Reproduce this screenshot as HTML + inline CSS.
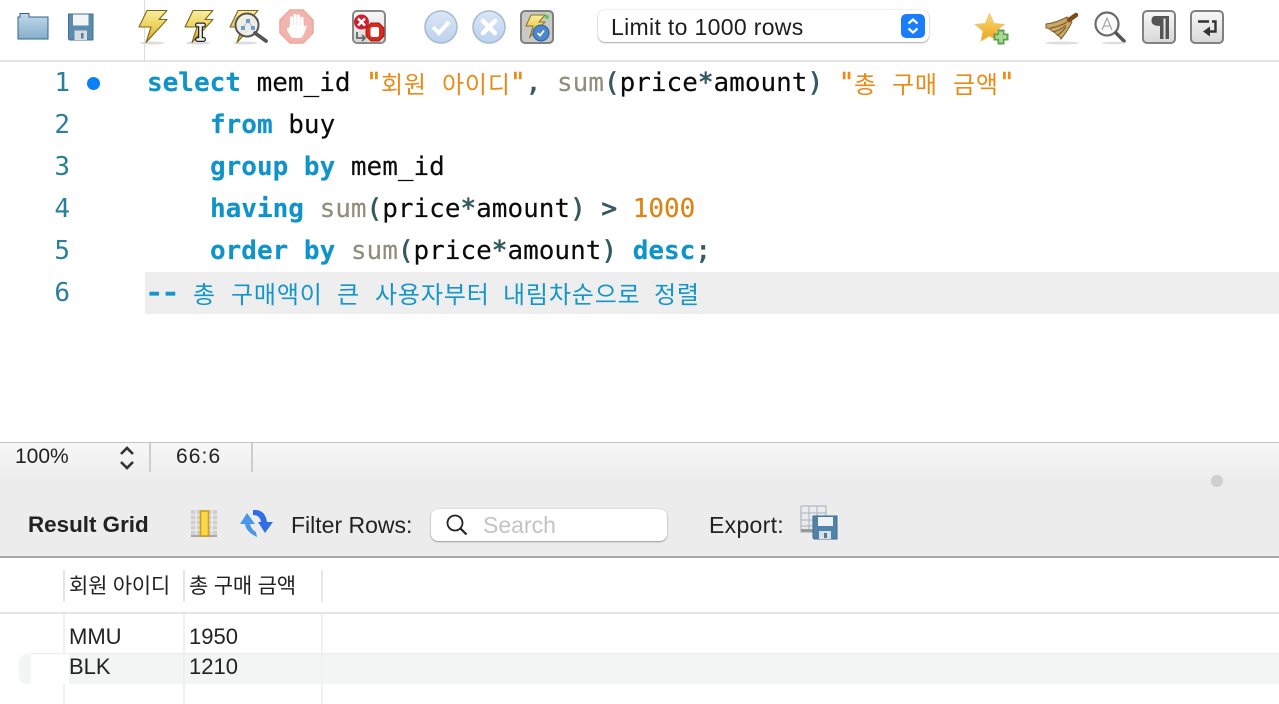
<!DOCTYPE html>
<html><head><meta charset="utf-8"><style>
html,body{margin:0;padding:0;background:#fff;width:1279px;height:704px;overflow:hidden}
.a{position:absolute;white-space:pre}
.l{position:absolute;left:147px;height:42px;line-height:42px;font:26px/42px "DejaVu Sans Mono","Noto Sans CJK KR",monospace;color:#0b0b0b;white-space:pre;-webkit-text-stroke:.15px}
.k{color:#0f93c9;font-weight:bold}.f{color:#8f8d7b}.p{color:#34595f;-webkit-text-stroke:.7px #34595f}.s{color:#ea8a17}.q{color:#ea8a17;-webkit-text-stroke:.5px #ea8a17}.n{color:#dc8311}.c{color:#1595c8}
.h{font-family:"Noto Sans CJK KR",sans-serif;font-size:24px;font-weight:400;letter-spacing:.85px;display:inline-block;line-height:30px;-webkit-text-stroke:0}
.g{position:absolute;left:0;width:70px;text-align:right;font:26px/42px "DejaVu Sans Mono",monospace;color:#2b7f99}
.u{font-family:"Liberation Sans","Noto Sans CJK KR",sans-serif;color:#222}
svg{position:absolute;overflow:visible}
</style></head><body>
<div class="a" style="left:0;top:60px;width:1279px;height:2px;background:#e4e4e4"></div>
<div class="a" style="left:144px;top:0;width:1px;height:62px;background:#dcdcdc"></div>

<!-- toolbar icons -->
<svg style="left:0;top:0" width="1279" height="60" viewBox="0 0 1279 60">
<defs>
<linearGradient id="fo" x1="0" y1="0" x2="0" y2="1"><stop offset="0" stop-color="#c3d9ea"/><stop offset="1" stop-color="#86aecd"/></linearGradient>
<linearGradient id="bo" x1="0" y1="0" x2="0" y2="1"><stop offset="0" stop-color="#f9eda0"/><stop offset=".5" stop-color="#ecd25a"/><stop offset="1" stop-color="#c9a32e"/></linearGradient>
<linearGradient id="ci" x1="0" y1="0" x2="0" y2="1"><stop offset="0" stop-color="#dbe6f6"/><stop offset="1" stop-color="#bcd2ee"/></linearGradient>
<linearGradient id="bt" x1="0" y1="0" x2="0" y2="1"><stop offset="0" stop-color="#f8f8f8"/><stop offset="1" stop-color="#d8d8d8"/></linearGradient>
<linearGradient id="st" x1="0" y1="0" x2="0" y2="1"><stop offset="0" stop-color="#f9d976"/><stop offset="1" stop-color="#eea21b"/></linearGradient>
</defs>
<!-- folder -->
<path d="M18 39V17h2v-3.500h9V17h19v22z" fill="url(#fo)" stroke="#2f6488" stroke-width="1"/>
<!-- save -->
<path d="M68.500 14h24.500v25.500q0 .5-1 .5H70q-1.500 0-1.500-2z" fill="#5b8bad" stroke="#3f7092"/>
<rect x="73" y="14.500" width="15.500" height="11" fill="#f2f4f6"/>
<rect x="74.500" y="30.500" width="12.500" height="9.500" fill="#d5dde3"/><rect x="81" y="33" width="2.500" height="5.500" fill="#5b7f99"/>
<!-- bolts -->
<ellipse cx="152" cy="43" rx="12" ry="1.500" fill="#ddd"/><path d="M147 10.500h20l-8 9h8l-21 23 5-15.500h-12z" fill="url(#bo)" stroke="#7d6517" stroke-width="1.100" stroke-linejoin="round"/>
<ellipse cx="198" cy="43" rx="12" ry="1.500" fill="#ddd"/><path d="M193 10.500h20l-8 9h8l-21 23 5-15.500h-12z" fill="url(#bo)" stroke="#7d6517" stroke-width="1.100" stroke-linejoin="round"/>
<path d="M197.500 25h6M200.500 25v14M197.500 39.500h6" stroke="#222" stroke-width="5" stroke-linecap="round" fill="none"/><path d="M197.500 25h6M200.500 25v14M197.500 39.500h6" stroke="#f2f2f2" stroke-width="2.500" stroke-linecap="round" fill="none"/>
<ellipse cx="245" cy="43" rx="12" ry="1.500" fill="#ddd"/><path d="M238 10.500h20l-8 9h8l-21 23 5-15.500h-12z" fill="url(#bo)" stroke="#7d6517" stroke-width="1.100" stroke-linejoin="round"/>
<circle cx="247" cy="25" r="11.500" fill="#eef0ea" fill-opacity=".92" stroke="#555" stroke-width="2"/><path d="M255 33l11 8" stroke="#555" stroke-width="3.800" stroke-linecap="round"/>
<path d="M248 21l-5 7M248 21l5 7" stroke="#a9c2e6" stroke-width="1"/><rect x="246" y="19" width="4" height="4" fill="#6f9ad8"/><rect x="241" y="26" width="4" height="4" fill="#6f9ad8"/><rect x="251" y="26" width="4" height="4" fill="#6f9ad8"/>
<!-- stop -->
<path d="M290 10h13l10 10v13l-10 10h-13l-10-10V20z" fill="#f2b4ad" stroke="#eaa8a0" stroke-width="1.500"/>
<path d="M291.500 27V18M295 27V15.500M298.500 27V16M302 28V18.500" stroke="#fff" stroke-width="3.200" stroke-linecap="round" fill="none"/>
<path d="M290 25h14v8q-1 5-5 5h-5q-2 0-3.500-2l-3.500-6q-.5-3 2-2z" fill="#fff"/><path d="M304 27q1-2 3-1l-3 8z" fill="#fff"/>
<!-- stop on error btn -->
<rect x="353" y="11" width="32" height="32" rx="4" fill="url(#bt)" stroke="#888" stroke-width="2"/>
<circle cx="361.500" cy="22" r="7.500" fill="#cf1f2e"/><path d="M358 18.500l7 7M365 18.500l-7 7" stroke="#fff" stroke-width="2.500"/>
<path d="M371 23h8l5 5v8l-5 5h-8l-5-5v-8z" fill="#d62a1c" stroke="#a81b10"/><rect x="370.500" y="27" width="8.500" height="10" rx="2" fill="#fff"/>
<path d="M357 32v6h7M362 35l3 3-3 3" fill="none" stroke="#666" stroke-width="1.800"/>
<!-- commit/rollback -->
<circle cx="441" cy="27" r="16" fill="url(#ci)" stroke="#a6b9d2" stroke-width="1.500"/>
<path d="M433 27l6 6 10-11" fill="none" stroke="#fff" stroke-width="4"/>
<circle cx="489" cy="27" r="16" fill="url(#ci)" stroke="#a6b9d2" stroke-width="1.500"/>
<path d="M483 21l12 12M495 21l-12 12" stroke="#fff" stroke-width="4.500" stroke-linecap="round"/>
<!-- autocommit -->
<rect x="521" y="11" width="32" height="32" rx="4" fill="#c9c9c6" stroke="#808080" stroke-width="2"/>
<path d="M531 15h14l-6 7h6l-15 15 3-11h-7z" fill="url(#bo)" stroke="#8b7320"/>
<circle cx="547" cy="17" r="2" fill="#50d050"/>
<circle cx="541" cy="33" r="8" fill="#4c86d0" stroke="#2c5f9f"/><path d="M537.500 33l2.500 2.500 4-5" fill="none" stroke="#fff" stroke-width="1.800"/>
<!-- star -->
<path d="M989.500 14l4.500 9.500 10 1-7.500 6.500 2 10-9-5-8.500 5 2-10-7.500-6.500 10-1z" fill="url(#st)" stroke="#e8c66a"/>
<path d="M1001 29.500v15M993.500 37h15" stroke="#5f9f4f" stroke-width="7"/><path d="M1001 31.500v11M995.500 37h11" stroke="#a8da96" stroke-width="3.800"/>
<!-- broom -->
<ellipse cx="1062" cy="43" rx="17" ry="1.500" fill="#ddd"/>
<path d="M1046 24q10-1 21-7l5 5q-5 10-11 17-1-3-4-4-2-3-5-4-3-3-6-3z" fill="#c9a868" stroke="#7d5f2c" stroke-width="1"/>
<path d="M1050 28q9-1 17-6M1053 32q8-2 13-7M1058 35q4-3 8-8" stroke="#7d5f2c" fill="none" stroke-width="1.200"/>
<path d="M1069 20l7-5" stroke="#7f4d1b" stroke-width="4.500" stroke-linecap="round"/>
<!-- magnify A -->
<circle cx="1107" cy="24" r="11.500" fill="#fbfbfb" stroke="#6b6b6b" stroke-width="2.200"/>
<path d="M1102 30l5-12 5 12M1104 26h6" fill="none" stroke="#999" stroke-width="1"/>
<path d="M1116 33l8 8" stroke="#555" stroke-width="3.500" stroke-linecap="round"/>
<ellipse cx="1114" cy="43" rx="12" ry="1.200" fill="#ddd"/>
<!-- para -->
<rect x="1143" y="11" width="32" height="32" rx="4" fill="url(#bt)" stroke="#808080" stroke-width="2"/>
<path d="M1155 16h14v23h-3.500V18.500h-2V39H1160V26q-8.500 0-8.500-5T1155 16z" fill="#555"/>
<!-- wrap -->
<rect x="1191" y="11" width="32" height="32" rx="4" fill="url(#bt)" stroke="#808080" stroke-width="2"/>
<path d="M1198 21.500h11M1212 21.500h3.500v10h-9" fill="none" stroke="#333" stroke-width="2.400"/><path d="M1203 31.500l7-5v10z" fill="#333"/>
</svg>

<!-- combo -->
<div class="a" style="left:598px;top:10px;width:331px;height:32px;background:#fff;border-radius:7px;box-shadow:0 0 1px rgba(0,0,0,.35),0 1px 1.500px rgba(0,0,0,.3)"></div>
<div class="a u" style="left:611px;top:13px;font-size:23px;line-height:28px;letter-spacing:.33px;color:#1d1d1d">Limit to 1000 rows</div>
<svg style="left:901px;top:14px" width="24" height="24"><rect width="24" height="24" rx="5" fill="#1a7dfb"/><path d="M7.500 9.500L12 5.500l4.500 4M7.500 14.500l4.500 4 4.500-4" fill="none" stroke="#fff" stroke-width="2.200"/></svg>

<!-- editor -->
<div class="a" style="left:145px;top:272px;width:1134px;height:42px;background:#eeeeee"></div>
<div class="g" style="top:62px">1</div><div class="g" style="top:104px">2</div><div class="g" style="top:146px">3</div><div class="g" style="top:188px">4</div><div class="g" style="top:230px">5</div><div class="g" style="top:272px">6</div>
<div class="a" style="left:87px;top:76.500px;width:13px;height:13px;border-radius:50%;background:#0b7ff5"></div>

<div class="l" style="top:62px"><span class="k">select</span> mem_id <span class="q">"</span></div>
<div class="l h" style="left:381px;top:68px;color:#ea8a17">회원</div>
<div class="l h" style="left:442px;top:68px;color:#ea8a17">아이디</div>
<div class="l" style="top:62px;left:510px"><span class="q">"</span><span class="p">,</span> <span class="f">sum</span><span class="p">(</span>price<span class="p">*</span>amount<span class="p">)</span> <span class="q">"</span></div>
<div class="l h" style="left:854px;top:68px;color:#ea8a17">총</div>
<div class="l h" style="left:892px;top:68px;color:#ea8a17">구매</div>
<div class="l h" style="left:953px;top:68px;color:#ea8a17">금액</div>
<div class="l q" style="left:999px;top:62px">"</div>

<div class="l" style="top:104px;left:210px"><span class="k">from</span> buy</div>
<div class="l" style="top:146px;left:210px"><span class="k">group by</span> mem_id</div>
<div class="l" style="top:188px;left:210px"><span class="k">having</span> <span class="f">sum</span><span class="p">(</span>price<span class="p">*</span>amount<span class="p">)</span> <span class="p">&gt;</span> <span class="n">1000</span></div>
<div class="l" style="top:230px;left:210px"><span class="k">order by</span> <span class="f">sum</span><span class="p">(</span>price<span class="p">*</span>amount<span class="p">)</span> <span class="k">desc</span><span class="p">;</span></div>

<div class="l c" style="top:272px;left:145px;transform:scaleX(1.18);transform-origin:left;letter-spacing:-2px;font-weight:bold">--</div>
<div class="l h" style="left:193px;top:278px;color:#1595c8">총</div>
<div class="l h" style="left:231px;top:278px;color:#1595c8">구매액이</div>
<div class="l h" style="left:337px;top:278px;color:#1595c8">큰</div>
<div class="l h" style="left:375px;top:278px;color:#1595c8">사용자부터</div>
<div class="l h" style="left:503px;top:278px;color:#1595c8">내림차순으로</div>
<div class="l h" style="left:654px;top:278px;color:#1595c8">정렬</div>

<!-- status -->
<div class="a" style="left:0;top:442px;width:1279px;height:115px;background:linear-gradient(#f7f7f7 0,#ececec 40px,#ececec 100%);border-top:1px solid #c4c4c4;box-sizing:border-box"></div>
<div class="a" style="left:149px;top:443px;width:2px;height:29px;background:#cdcdcd"></div>
<div class="a" style="left:251px;top:443px;width:2px;height:29px;background:#cdcdcd"></div>
<div class="a u" style="left:15px;top:445px;font-size:21px;line-height:24px">100%</div>
<svg style="left:119px;top:445px" width="16" height="26"><path d="M2 9l6-6 6 6M2 17l6 6 6-6" fill="none" stroke="#333" stroke-width="2.600"/></svg>
<div class="a u" style="left:176px;top:445px;font-size:21px;line-height:24px;letter-spacing:1.1px">66:6</div>
<div class="a" style="left:1211px;top:475px;width:12px;height:12px;border-radius:50%;background:#cfcfcf"></div>

<div class="a u" style="left:28px;top:511px;font-size:22.400px;line-height:28px;font-weight:bold">Result Grid</div>
<svg style="left:190px;top:509px" width="30" height="30"><rect x="1" y="1" width="26" height="27" fill="#cfcfcf"/><path d="M1 6h26M1 11h26M1 16h26M1 21h26M6 1v27M22 1v27" stroke="#f4f4f4" stroke-width="1"/><rect x="1" y="26" width="26" height="2" fill="#a9a9a9"/><rect x="10.500" y="2" width="8" height="25" fill="#f7d94c" stroke="#d29d1a" stroke-width="1.600"/></svg>
<svg style="left:240px;top:509px" width="34" height="30"><path d="M7 4L0 15h5q1 8 12 13l-1-5q-5-3-6-8h5z" fill="#4a97ea"/><path d="M13 1q12-1 14 12h6L25 24 18 13h3q-1-7-8-7z" fill="#2f6fe6"/></svg>
<div class="a u" style="left:291px;top:511px;font-size:23px;line-height:28px">Filter Rows:</div>
<div class="a" style="left:431px;top:509px;width:236px;height:32px;background:#fff;border-radius:7px;box-shadow:0 0 1px rgba(0,0,0,.35),0 1px 1.500px rgba(0,0,0,.3)"></div>
<svg style="left:444px;top:512px" width="26" height="26"><circle cx="11" cy="11" r="7.500" fill="none" stroke="#222" stroke-width="1.800"/><path d="M16.500 16.500l6 6" stroke="#222" stroke-width="2.200"/></svg>
<div class="a u" style="left:483px;top:511px;font-size:23px;line-height:28px;color:#c3c3c3">Search</div>
<div class="a u" style="left:709px;top:511px;font-size:23px;line-height:28px;letter-spacing:.3px">Export:</div>
<svg style="left:800px;top:505px" width="40" height="36"><rect x="1" y="1" width="25" height="26" fill="#e8ecf0" stroke="#a5adb5"/><path d="M1 8h25M1 15h25M1 21h25M9 1v26M17 1v26" stroke="#aab2ba"/><rect x="1" y="24" width="16" height="3" fill="#9a9a9a"/>
<path d="M13 11h24v23H15q-2 0-2-2z" fill="#4f83a8" stroke="#3a6c90"/><rect x="18" y="12" width="15" height="9" fill="#eef2f5"/><rect x="19" y="26" width="12" height="8" fill="#d8e0e6"/><rect x="24" y="28" width="3" height="5" fill="#4f7b9b"/></svg>

<!-- grid -->
<div class="a" style="left:0;top:556px;width:1279px;height:2px;background:#a9a9a9"></div>
<div class="a" style="left:0;top:558px;width:1279px;height:146px;background:#fff"></div>
<div class="a" style="left:19px;top:654px;width:1260px;height:30px;background:#f3f4f4;border-radius:8px 0 0 8px"></div>
<div class="a" style="left:0;top:612px;width:1279px;height:2px;background:#e4e4e4"></div>
<div class="a" style="left:63px;top:570px;width:2px;height:32px;background:#e6e6e6"></div>
<div class="a" style="left:183px;top:570px;width:2px;height:32px;background:#e6e6e6"></div>
<div class="a" style="left:321px;top:570px;width:2px;height:32px;background:#e6e6e6"></div>
<div class="a" style="left:63px;top:614px;width:2px;height:90px;background:#f0f0f0"></div>
<div class="a" style="left:183px;top:614px;width:2px;height:90px;background:#f0f0f0"></div>
<div class="a" style="left:321px;top:614px;width:2px;height:90px;background:#f0f0f0"></div>
<div class="a" style="left:31px;top:654px;width:38px;height:30px;background:#fff"></div>
<div class="a" style="left:31px;top:653px;width:1248px;height:1px;background:#ececec"></div>
<div class="a u" style="left:69px;top:573px;font-size:21px;line-height:28px;letter-spacing:-.25px">회원 아이디</div>
<div class="a u" style="left:189px;top:573px;font-size:21px;line-height:28px;letter-spacing:-.2px">총 구매 금액</div>
<div class="a u" style="left:69px;top:624px;font-size:22px;line-height:26px">MMU</div>
<div class="a u" style="left:189px;top:624px;font-size:22px;line-height:26px">1950</div>
<div class="a u" style="left:69px;top:654px;font-size:22px;line-height:26px">BLK</div>
<div class="a u" style="left:189px;top:654px;font-size:22px;line-height:26px">1210</div>
</body></html>
